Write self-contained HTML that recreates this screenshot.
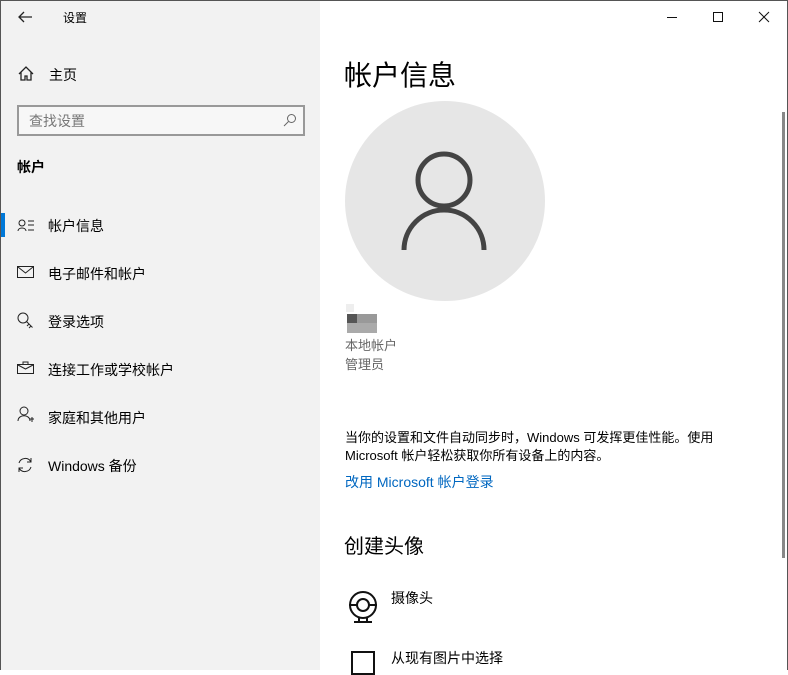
<!DOCTYPE html>
<html><head><meta charset="utf-8"><style>
*{margin:0;padding:0;box-sizing:border-box}
body{width:788px;height:670px;overflow:hidden;font-family:"Liberation Sans","Noto Sans CJK SC",sans-serif;color:#000;position:relative;background:#fff}
.frame{position:absolute;inset:0;border:1px solid #555;border-bottom:none;pointer-events:none;z-index:5}
.side{position:absolute;left:0;top:0;width:320px;height:670px;background:#f2f2f2}
.t{position:absolute;white-space:nowrap;font-size:14px}
.nav{position:absolute;left:48px;font-size:14px;white-space:nowrap}
svg{position:absolute}
</style></head><body>
<div class="side">
<svg style="left:17px;top:10px" width="16" height="14" viewBox="0 0 16 14"><path d="M15 7H2M7 2L2 7l5 5" stroke="#222" stroke-width="1.3" fill="none"/></svg>
<div class="t" style="left:63px;top:9px;font-size:12px">设置</div>
<svg style="left:18px;top:66px" width="16" height="15" viewBox="0 0 16 15"><path d="M1 8L8 1l7 7M3 6v8h4v-4h2v4h4V6" stroke="#222" stroke-width="1.3" fill="none"/></svg>
<div class="t" style="left:49px;top:65px">主页</div>
<div style="position:absolute;left:17px;top:105px;width:288px;height:31px;border:2px solid #999;background:#f7f7f7"></div>
<div class="t" style="left:29px;top:111px;color:#777">查找设置</div>
<svg style="left:283px;top:113px" width="14" height="14" viewBox="0 0 14 14"><circle cx="8.5" cy="5.5" r="4" stroke="#666" fill="none"/><path d="M5.5 8.5L1 13" stroke="#666"/></svg>
<div class="t" style="left:17px;top:157px;font-weight:bold">帐户</div>
<div style="position:absolute;left:0;top:213px;width:5px;height:24px;background:#0078d7"></div>
<svg style="left:17px;top:219px" width="18" height="14" viewBox="0 0 18 14"><circle cx="5" cy="4" r="3" stroke="#222" fill="none"/><path d="M1 12c0-4 8-4 8 0M11 2h6M11 6h6M11 11h6" stroke="#222" fill="none"/></svg>
<div class="nav" style="top:216px">帐户信息</div>
<svg style="left:17px;top:266px" width="17" height="12" viewBox="0 0 17 12"><rect x=".5" y=".5" width="16" height="11" stroke="#222" fill="none"/><path d="M1 1l7.5 6L16 1" stroke="#222" fill="none"/></svg>
<div class="nav" style="top:264px">电子邮件和帐户</div>
<svg style="left:17px;top:312px" width="18" height="18" viewBox="0 0 18 18"><circle cx="6" cy="6" r="5" stroke="#222" fill="none"/><path d="M9.5 9.5l6 6M12 12l-2 2M14 14l-2 2" stroke="#222" fill="none"/></svg>
<div class="nav" style="top:312px">登录选项</div>
<svg style="left:17px;top:361px" width="17" height="13" viewBox="0 0 17 13"><rect x=".5" y="3.5" width="16" height="9" stroke="#222" fill="none"/><path d="M6 3.5V1h5v2.5M1 4l7.5 4L16 4" stroke="#222" fill="none"/></svg>
<div class="nav" style="top:360px">连接工作或学校帐户</div>
<svg style="left:17px;top:406px" width="18" height="18" viewBox="0 0 18 18"><circle cx="7" cy="5" r="4" stroke="#222" fill="none"/><path d="M1 15c0-7 12-7 12 0M13 13h4M15 11v5" stroke="#222" fill="none"/></svg>
<div class="nav" style="top:408px">家庭和其他用户</div>
<svg style="left:17px;top:457px" width="16" height="16" viewBox="0 0 16 16"><path d="M2 6a6.5 6.5 0 0 1 12-1M14 10a6.5 6.5 0 0 1-12 1M14 1v4h-4M2 15v-4h4" stroke="#222" fill="none"/></svg>
<div class="nav" style="top:456px">Windows 备份</div>
</div>
<svg style="left:665px;top:10px" width="110" height="16" viewBox="0 0 110 16"><path d="M2 7.5h10" stroke="#111"/><rect x="48.5" y="2.5" width="9" height="9" stroke="#111" fill="none"/><path d="M94 2l10 10M104 2L94 12" stroke="#111"/></svg>
<div style="position:absolute;left:782px;top:112px;width:3px;height:446px;background:#888"></div>
<div class="t" style="left:344px;top:54px;font-size:28px">帐户信息</div>
<svg style="left:345px;top:101px" width="200" height="200" viewBox="0 0 200 200"><circle cx="100" cy="100" r="100" fill="#e6e6e6"/><circle cx="99" cy="79" r="26" stroke="#444" stroke-width="5" fill="none"/><path d="M59 149a40 40 0 0 1 80 0" stroke="#444" stroke-width="5" fill="none"/></svg>
<div style="position:absolute;left:346px;top:304px;width:8px;height:8px;background:#eee"></div>
<div style="position:absolute;left:347px;top:314px;width:10px;height:9px;background:#555"></div>
<div style="position:absolute;left:357px;top:314px;width:20px;height:9px;background:#999"></div>
<div style="position:absolute;left:347px;top:323px;width:30px;height:10px;background:#aaa"></div>
<div class="t" style="left:345px;top:335px;color:#666;font-size:13px">本地帐户</div>
<div class="t" style="left:345px;top:354px;color:#666;font-size:13px">管理员</div>
<div class="t" style="left:345px;top:427px;font-size:13px">当你的设置和文件自动同步时，Windows 可发挥更佳性能。使用</div>
<div class="t" style="left:345px;top:445px;font-size:13px">Microsoft 帐户轻松获取你所有设备上的内容。</div>
<div class="t" style="left:345px;top:472px;color:#0067c0">改用 Microsoft 帐户登录</div>
<div class="t" style="left:344px;top:530px;font-size:20px">创建头像</div>
<svg style="left:347px;top:591px" width="32" height="32" viewBox="0 0 32 32"><circle cx="16" cy="14" r="13" stroke="#111" stroke-width="2" fill="none"/><circle cx="16" cy="14" r="6" stroke="#111" stroke-width="2" fill="none"/><path d="M2 14h8M22 14h8M12 27v3M20 27v3M7 31h18" stroke="#111" stroke-width="2" fill="none"/></svg>
<div class="t" style="left:391px;top:588px">摄像头</div>
<div style="position:absolute;left:351px;top:651px;width:24px;height:24px;border:2px solid #111"></div>
<div class="t" style="left:391px;top:648px">从现有图片中选择</div>
<div class="frame"></div>
</body></html>
